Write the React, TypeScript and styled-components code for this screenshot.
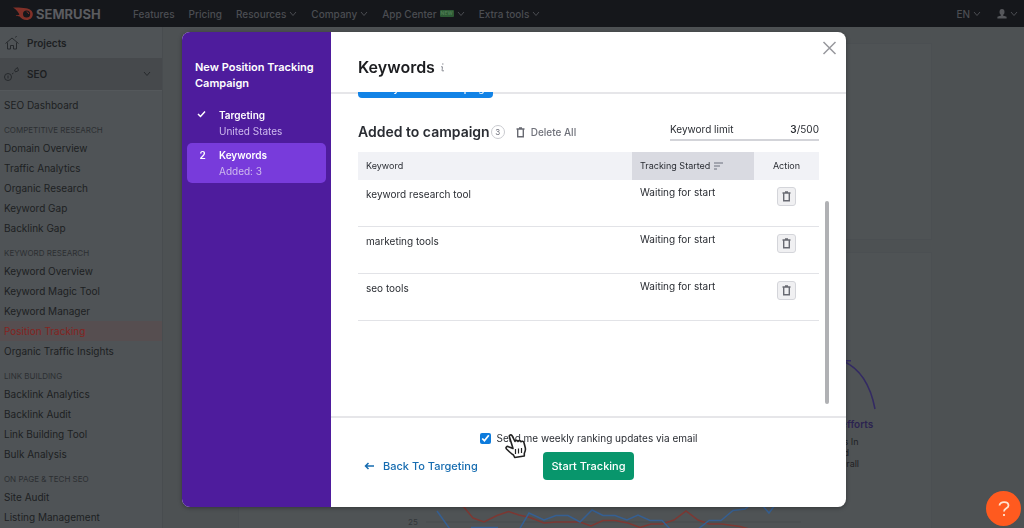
import React from "react";
import styled, { createGlobalStyle, css } from "styled-components";

const Global = createGlobalStyle`
  *, *::before, *::after { box-sizing: border-box; }
  body { margin: 0; font-family: Inter, "Liberation Sans", sans-serif; font-size: 10px; line-height: 16px; color: #2a2d33; background: #4d5153; }
  button, input { font: inherit; }
  h1, h2, h3, p, ul, ol { margin: 0; padding: 0; }
  ul, ol { list-style: none; }
  a { color: inherit; text-decoration: none; }
  svg { display: block; flex: none; }
`;

const Page = styled.div`
  display: flex;
  flex-direction: column;
  height: 100vh;
  overflow: hidden;
`;

const TopBar = styled.header`
  display: flex;
  align-items: center;
  flex: none;
  height: 27px;
  padding: 0 6px 0 13px;
  background: #15171b;
  color: #4b4d52;
`;

const Logo = styled.a`
  display: flex;
  align-items: center;
  gap: 3px;
  width: 120px;
  font-size: 13px;
  font-weight: 700;
  color: #5b5c60;
`;

const Nav = styled.nav`
  display: flex;
  flex: 1;
  gap: 14px;
`;

const NavLink = styled.a`
  display: flex;
  align-items: center;
  gap: 3px;
  font-weight: 500;
  white-space: nowrap;
`;

const NewTag = styled.span`
  height: 7px;
  padding: 0 1px;
  border-radius: 1px;
  background: #2c5a34;
  color: #4d7a52;
  font-size: 5px;
  line-height: 7px;
  font-weight: 700;
`;

const UserMenu = styled.div`
  display: flex;
  gap: 16px;
`;

const Body = styled.div`
  display: flex;
  flex: 1;
  min-height: 0;
`;

const Sidebar = styled.aside`
  flex: none;
  width: 163px;
  border-right: 1px solid #484c4f;
  background: #4f5356;
  color: #1d1f22;
  overflow: hidden;
`;

const SideTop = styled.a<{ $active?: boolean }>`
  display: flex;
  align-items: center;
  gap: 7px;
  height: ${(p) => (p.$active ? 33 : 31)}px;
  padding: 0 11px 0 4px;
  font-weight: 600;
  background: ${(p) => (p.$active ? "#46494c" : "transparent")};
  ${(p) => p.$active && css`margin-bottom: 4px; border-bottom: 1px solid #54585b;`}
  span { flex: 1; }
`;

const SideHeading = styled.h3`
  padding: 7px 4px 0;
  font-size: 8px;
  line-height: 16px;
  font-weight: 400;
  color: #2c2f32;
`;

const SideLink = styled.a<{ $active?: boolean }>`
  display: block;
  padding: 0 4px;
  line-height: 20px;
  color: ${(p) => (p.$active ? "#84231f" : "inherit")};
  background: ${(p) => (p.$active ? "#564e50" : "transparent")};
`;

const Content = styled.main`
  display: flex;
  flex-direction: column;
  gap: 12px;
  flex: 1;
  min-width: 0;
  padding: 16px 92px 0 75px;
`;

const Card = styled.section<{ $grow?: boolean }>`
  flex: ${(p) => (p.$grow ? "1" : "none")};
  min-height: 197px;
  border: 1px solid #4b4f52;
  border-bottom-width: ${(p) => (p.$grow ? 0 : 1)}px;
  background: #4f5355;
  overflow: hidden;
`;

const Feature = styled.div`
  width: 90px;
  margin: 107px 0 0 auto;
  font-size: 9px;
  line-height: 11px;
  color: #1f2124;
  h3 { margin: 6px 0 4px; font-size: 10px; line-height: 16px; font-weight: 600; color: #2b2350; }
`;

const Chart = styled.svg`
  margin-top: 31px;
`;

const Overlay = styled.div`
  position: fixed;
  inset: 0;
  display: flex;
  justify-content: center;
  padding: 32px 4px 21px 8px;
`;

const Dialog = styled.div`
  display: flex;
  width: 100%;
  max-width: 664px;
  border-radius: 8px;
  background: #fff;
  box-shadow: 0 1px 4px rgba(0, 0, 0, 0.35);
  overflow: hidden;
`;

const Steps = styled.div`
  flex: none;
  width: 149px;
  padding: 27px 5px 0;
  background: #4e1c9d;
  color: #fff;
`;

const StepsTitle = styled.h2`
  padding: 0 8px;
  margin-bottom: 12px;
  font-size: 11px;
  line-height: 16px;
  font-weight: 600;
`;

const Step = styled.li<{ $active?: boolean }>`
  display: grid;
  grid-template-columns: 22px 1fr;
  padding: 4px 0 4px 10px;
  border-radius: 5px;
  background: ${(p) => (p.$active ? "#783bdb" : "transparent")};
  strong { font-weight: 600; }
  small { grid-column: 2; font-size: 10px; color: #cdb9ee; }
  svg { margin-top: 3px; }
`;

const Pane = styled.div`
  display: flex;
  flex-direction: column;
  flex: 1;
  min-width: 0;
`;

const PaneHead = styled.header`
  display: flex;
  align-items: center;
  gap: 5px;
  flex: none;
  height: 62px;
  padding: 10px 9px 0 27px;
  border-bottom: 2px solid #e6e6e9;
  h1 { font-size: 16px; line-height: 24px; font-weight: 600; color: #1c1d20; }
`;

const CloseButton = styled.button`
  align-self: flex-start;
  margin: -1px 0 0 auto;
  padding: 0;
  border: 0;
  background: none;
  cursor: pointer;
`;

const ScrollArea = styled.div`
  position: relative;
  flex: 1;
  min-height: 0;
  margin-top: -2px;
  padding: 0 27px;
  overflow: hidden;
`;

const ScrollThumb = styled.div`
  position: absolute;
  top: 109px;
  right: 17px;
  bottom: 12px;
  width: 4px;
  border-radius: 2px;
  background: #b0b1b4;
`;

const AddButton = styled.button`
  display: block;
  height: 20px;
  width: 135px;
  margin-top: -14px;
  padding: 0;
  border: 0;
  border-radius: 4px;
  background: #1283e6;
  color: #fff;
  font-weight: 500;
  line-height: 16px;
  white-space: nowrap;
`;

const ListHead = styled.div`
  display: flex;
  align-items: center;
  height: 54px;
  padding-top: 14px;
  h2 { font-size: 14px; line-height: 20px; font-weight: 600; white-space: nowrap; }
`;

const Count = styled.span`
  width: 14px;
  height: 14px;
  margin: 0 11px 0 1px;
  border: 1px solid #c9cacf;
  border-radius: 50%;
  font-size: 8px;
  line-height: 12px;
  text-align: center;
  color: #6c6e79;
`;

const DeleteAll = styled.button`
  display: flex;
  align-items: center;
  gap: 6px;
  padding: 0;
  border: 0;
  background: none;
  color: #6f717a;
  font-weight: 500;
`;

const Limit = styled.div`
  display: flex;
  justify-content: space-between;
  width: 149px;
  margin: 0 0 2px auto;
  padding-bottom: 2px;
  border-bottom: 2px solid #d3d4d9;
  b { font-weight: 600; }
`;

const Table = styled.table`
  width: 100%;
  table-layout: fixed;
  border-collapse: separate;
  border-spacing: 0;
  th { height: 28px; padding: 0 8px; background: #f1f2f6; font-size: 9px; font-weight: 400; text-align: left; }
  th:nth-child(2) { width: 122px; background: #d9dae1; }
  th:nth-child(3) { width: 65px; text-align: center; }
  td { height: 47px; padding: 6px 8px 0; border-bottom: 1px solid #e2e3e7; vertical-align: top; }
  td:nth-child(2) { padding-top: 4px; }
`;

const SortLabel = styled.span`
  display: flex;
  align-items: center;
  gap: 4px;
`;

const RowButton = styled.button`
  display: grid;
  place-items: center;
  width: 19px;
  height: 19px;
  margin: 1px auto 0;
  padding: 0;
  border: 1px solid #d4d5da;
  border-radius: 3px;
  background: #f0f0f2;
`;

const PaneFoot = styled.footer`
  flex: none;
  height: 91px;
  padding: 12px 27px 0;
  border-top: 2px solid #e6e6e9;
`;

const Consent = styled.div`
  position: relative;
  display: flex;
  justify-content: center;
  align-items: center;
  gap: 6px;
  input { width: 11px; height: 11px; margin: 0; accent-color: #0d7bdc; }
`;

const Actions = styled.div`
  display: grid;
  grid-template-columns: 1fr auto 1fr;
  align-items: center;
  margin-top: 6px;
  font-size: 11px;
  font-weight: 500;
`;

const BackButton = styled.button`
  display: flex;
  align-items: center;
  gap: 9px;
  padding: 0 0 0 6px;
  border: 0;
  background: none;
  color: #166cb0;
`;

const StartButton = styled.button`
  width: 91px;
  height: 28px;
  padding: 0;
  border: 0;
  border-radius: 4px;
  background: #08966c;
  color: #fff;
`;

const Pointer = styled.svg`
  position: absolute;
  top: 4px;
  left: calc(50% - 84px);
`;

const HelpButton = styled.button`
  position: fixed;
  right: 3px;
  bottom: 2px;
  display: grid;
  place-items: center;
  width: 35px;
  height: 35px;
  padding: 0;
  border: 0;
  border-radius: 50%;
  background: #ff5a1f;
`;

const Chevron = ({ color = "#4b4d52" }: { color?: string }) => (
  <svg width="8" height="6" viewBox="0 0 8 6" fill="none" stroke={color}>
    <path d="M1 1l3 3.5L7 1" />
  </svg>
);

const Trash = () => (
  <svg width="9" height="11" viewBox="0 0 9 11" fill="none" stroke="#686a72" strokeWidth="1.4">
    <path d="M0.500 2h8M3 1h3M1.700 2v7.800h5.600V2" />
  </svg>
);

const navItems = [
  { label: "Features" },
  { label: "Pricing" },
  { label: "Resources", menu: true },
  { label: "Company", menu: true },
  { label: "App Center", menu: true, tag: "NEW" },
  { label: "Extra tools", menu: true },
];

const groups = [
  { title: "COMPETITIVE RESEARCH", links: ["Domain Overview", "Traffic Analytics", "Organic Research", "Keyword Gap", "Backlink Gap"] },
  { title: "KEYWORD RESEARCH", links: ["Keyword Overview", "Keyword Magic Tool", "Keyword Manager", "Position Tracking", "Organic Traffic Insights"] },
  { title: "LINK BUILDING", links: ["Backlink Analytics", "Backlink Audit", "Link Building Tool", "Bulk Analysis"] },
  { title: "ON PAGE & TECH SEO", links: ["Site Audit", "Listing Management"] },
];

const keywords = ["keyword research tool", "marketing tools", "seo tools"];

export default function App() {
  return (
    <>
      <Global />
      <Page>
        <TopBar>
          <Logo href="#">
            <svg width="20" height="14" viewBox="0 0 20 14">
              <path d="M0 0.6C4 0.4 9 0.6 13 1.2C17 1.6 19.8 4 19.8 7.2C19.8 10.6 17 13 13.6 13C10.4 13 8 11.2 6.6 9.4C5.4 9.2 3.6 9 2.6 8.4C4 8.4 5.4 8.2 6.4 7.6C5.4 5.6 3 2 0 0.6Z" fill="#803028" />
              <circle cx="13.6" cy="7" r="3.6" fill="#15171b" />
              <path d="M13.6 4.8a2.4 2.4 0 0 1 2.2 2.2" fill="none" stroke="#803028" />
            </svg>
            SEMRUSH
          </Logo>
          <Nav>
            {navItems.map((n) => (
              <NavLink href="#" key={n.label}>
                {n.label}
                {n.tag && <NewTag>{n.tag}</NewTag>}
                {n.menu && <Chevron />}
              </NavLink>
            ))}
          </Nav>
          <UserMenu>
            <NavLink href="#">EN<Chevron /></NavLink>
            <NavLink href="#" aria-label="Account">
              <svg width="10" height="10" viewBox="0 0 10 10" fill="#55575b">
                <ellipse cx="5" cy="3" rx="2.5" ry="3" />
                <path d="M4 5h2v1.600l3.600 1.200V9.600H.4V7.800L4 6.600z" />
              </svg>
              <Chevron />
            </NavLink>
          </UserMenu>
        </TopBar>
        <Body>
          <Sidebar>
            <SideTop href="#">
              <svg width="16" height="16" viewBox="0 0 16 16" fill="none" stroke="#26292c">
                <path d="M1.500 8.500L8 3l6.500 5.500M3.500 7.500V14h3v-3.500h3V14h3V7.500M11.500 2.500l1-1.500" />
              </svg>
              <span>Projects</span>
            </SideTop>
            <SideTop href="#" $active>
              <svg width="16" height="16" viewBox="0 0 16 16" fill="none" stroke="#26292c">
                <circle cx="4" cy="11" r="3.500" />
                <path d="M4 9.500v3M8 8l1.500-1M10.500 4l3-2.500 1 3-3 1.500z" />
              </svg>
              <span>SEO</span>
              <Chevron color="#26292c" />
            </SideTop>
            <SideLink href="#">SEO Dashboard</SideLink>
            {groups.map((g) => (
              <nav key={g.title} aria-label={g.title}>
                <SideHeading>{g.title}</SideHeading>
                {g.links.map((l) => (
                  <SideLink href="#" key={l} $active={l === "Position Tracking"}>{l}</SideLink>
                ))}
              </nav>
            ))}
          </Sidebar>
          <Content>
            <Card />
            <Card $grow>
              <Feature>
                <svg width="36" height="50" viewBox="0 0 36 50" fill="none" stroke="#332a63" strokeWidth="1.500">
                  <path d="M0 0.800h10M2 1Q27 12 34 49" />
                </svg>
                <h3>efforts</h3>
                <p>&nbsp;s In<br />&nbsp;d<br />erall</p>
              </Feature>
              <Chart width="694" height="36" viewBox="238 500 694 36" fill="none" strokeWidth="1.500">
                <path d="M425 522H800" stroke="#484c4f" strokeWidth="1" />
                <text x="407" y="525" fontSize="8" fill="#33373a">25</text>
                <path stroke="#7d3833" d="M462 506L472 518L483 522L496 515.500L507.500 511.500L518 515L529 517.500L543 523L555 522H579L590 526L602 520.500H614L627 523L639 527.500L650 524H661L673 520L685 511L697 520L708 524H721L739 526.500L752 530" />
                <path stroke="#355f92" d="M436 511L451 532M518 530L528 513L543 520L555 515.500H567L579 522L591 510L602 515.500H614L626 520L637 515L649 520.500H661L670 530M696 530L708 520.500H720L732 510.500L744 509L752 503L761 505L768 513L774 505M470 527.500H497" />
              </Chart>
            </Card>
          </Content>
        </Body>
      </Page>

      <Overlay>
        <Dialog role="dialog" aria-modal="true" aria-labelledby="dialog-title">
          <Steps>
            <StepsTitle>New Position Tracking Campaign</StepsTitle>
            <ol>
              <Step>
                <svg width="9" height="8" viewBox="0 0 9 8" fill="none" stroke="#fff" strokeWidth="1.500">
                  <path d="M1 4l2.500 2.500L8 1.500" />
                </svg>
                <strong>Targeting</strong>
                <small>United States</small>
              </Step>
              <Step $active>
                <strong>&nbsp;2</strong>
                <strong>Keywords</strong>
                <small>Added: 3</small>
              </Step>
            </ol>
          </Steps>
          <Pane>
            <PaneHead>
              <h1 id="dialog-title">Keywords</h1>
              <svg width="5" height="9" viewBox="0 0 5 9" fill="none" stroke="#8e9097">
                <path d="M2 1h1.500M1 3.800h1.500L2 7.800h2" />
              </svg>
              <CloseButton aria-label="Close">
                <svg width="15" height="14" viewBox="0 0 15 14" fill="none" stroke="#97989d" strokeWidth="1.500">
                  <path d="M1.500 1l12 12M13.500 1l-12 12" />
                </svg>
              </CloseButton>
            </PaneHead>
            <ScrollArea>
              <AddButton>Add keywords to campaign</AddButton>
              <ListHead>
                <h2>Added to campaign</h2>
                <Count>3</Count>
                <DeleteAll><Trash />Delete All</DeleteAll>
                <Limit>
                  <span>Keyword limit</span>
                  <span><b>3</b>/500</span>
                </Limit>
              </ListHead>
              <Table>
                <thead>
                  <tr>
                    <th>Keyword</th>
                    <th>
                      <SortLabel>
                        Tracking Started
                        <svg width="9" height="8" viewBox="0 0 9 8" stroke="#6b6e7c">
                          <path d="M0 1h9M0 4h6M0 7h3" />
                        </svg>
                      </SortLabel>
                    </th>
                    <th>Action</th>
                  </tr>
                </thead>
                <tbody>
                  {keywords.map((k) => (
                    <tr key={k}>
                      <td>{k}</td>
                      <td>Waiting for start</td>
                      <td><RowButton aria-label={`Delete ${k}`}><Trash /></RowButton></td>
                    </tr>
                  ))}
                </tbody>
              </Table>
              <ScrollThumb />
            </ScrollArea>
            <PaneFoot>
              <Consent>
                <input id="weekly" type="checkbox" defaultChecked />
                <label htmlFor="weekly">Send me weekly ranking updates via email</label>
                <Pointer width="22" height="25" viewBox="0 0 22 25" fill="#fff" stroke="#222" strokeWidth="1.600" strokeLinejoin="round">
                  <path d="M4.500 3c-.8-2 1.800-3 2.700-1.200L10 7.500c.2-1.400 2.300-1.700 3 0 .5-1.200 2.500-1.200 3 .3.800-1 2.500-.7 3 1l1.300 5c.5 2.400-.3 4.200-1 5.500V22l-9.600 1.500-1.200-2.500C6 19.500 3.500 17 1.500 15c-1.300-1.500.3-3.200 2-2.300L8 14.500z" />
                  <path d="M10.500 15v5M13.500 14.500v5M16.500 14v5" strokeWidth="1.200" />
                </Pointer>
              </Consent>
              <Actions>
                <BackButton>
                  <svg width="10" height="8" viewBox="0 0 10 8" fill="none" stroke="#166cb0" strokeWidth="1.500">
                    <path d="M10 4H1.500M4.500 1l-3 3 3 3" />
                  </svg>
                  Back To Targeting
                </BackButton>
                <StartButton>Start Tracking</StartButton>
              </Actions>
            </PaneFoot>
          </Pane>
        </Dialog>
      </Overlay>

      <HelpButton aria-label="Help">
        <svg width="12" height="16" viewBox="0 0 12 16" fill="none" stroke="#ffe3d0" strokeWidth="1.800">
          <path d="M1.500 4.500C1.500 0 10.500 0 10.500 4.500C10.500 7.500 6 7.200 6 10.500M6 13v2" />
        </svg>
      </HelpButton>
    </>
  );
}
